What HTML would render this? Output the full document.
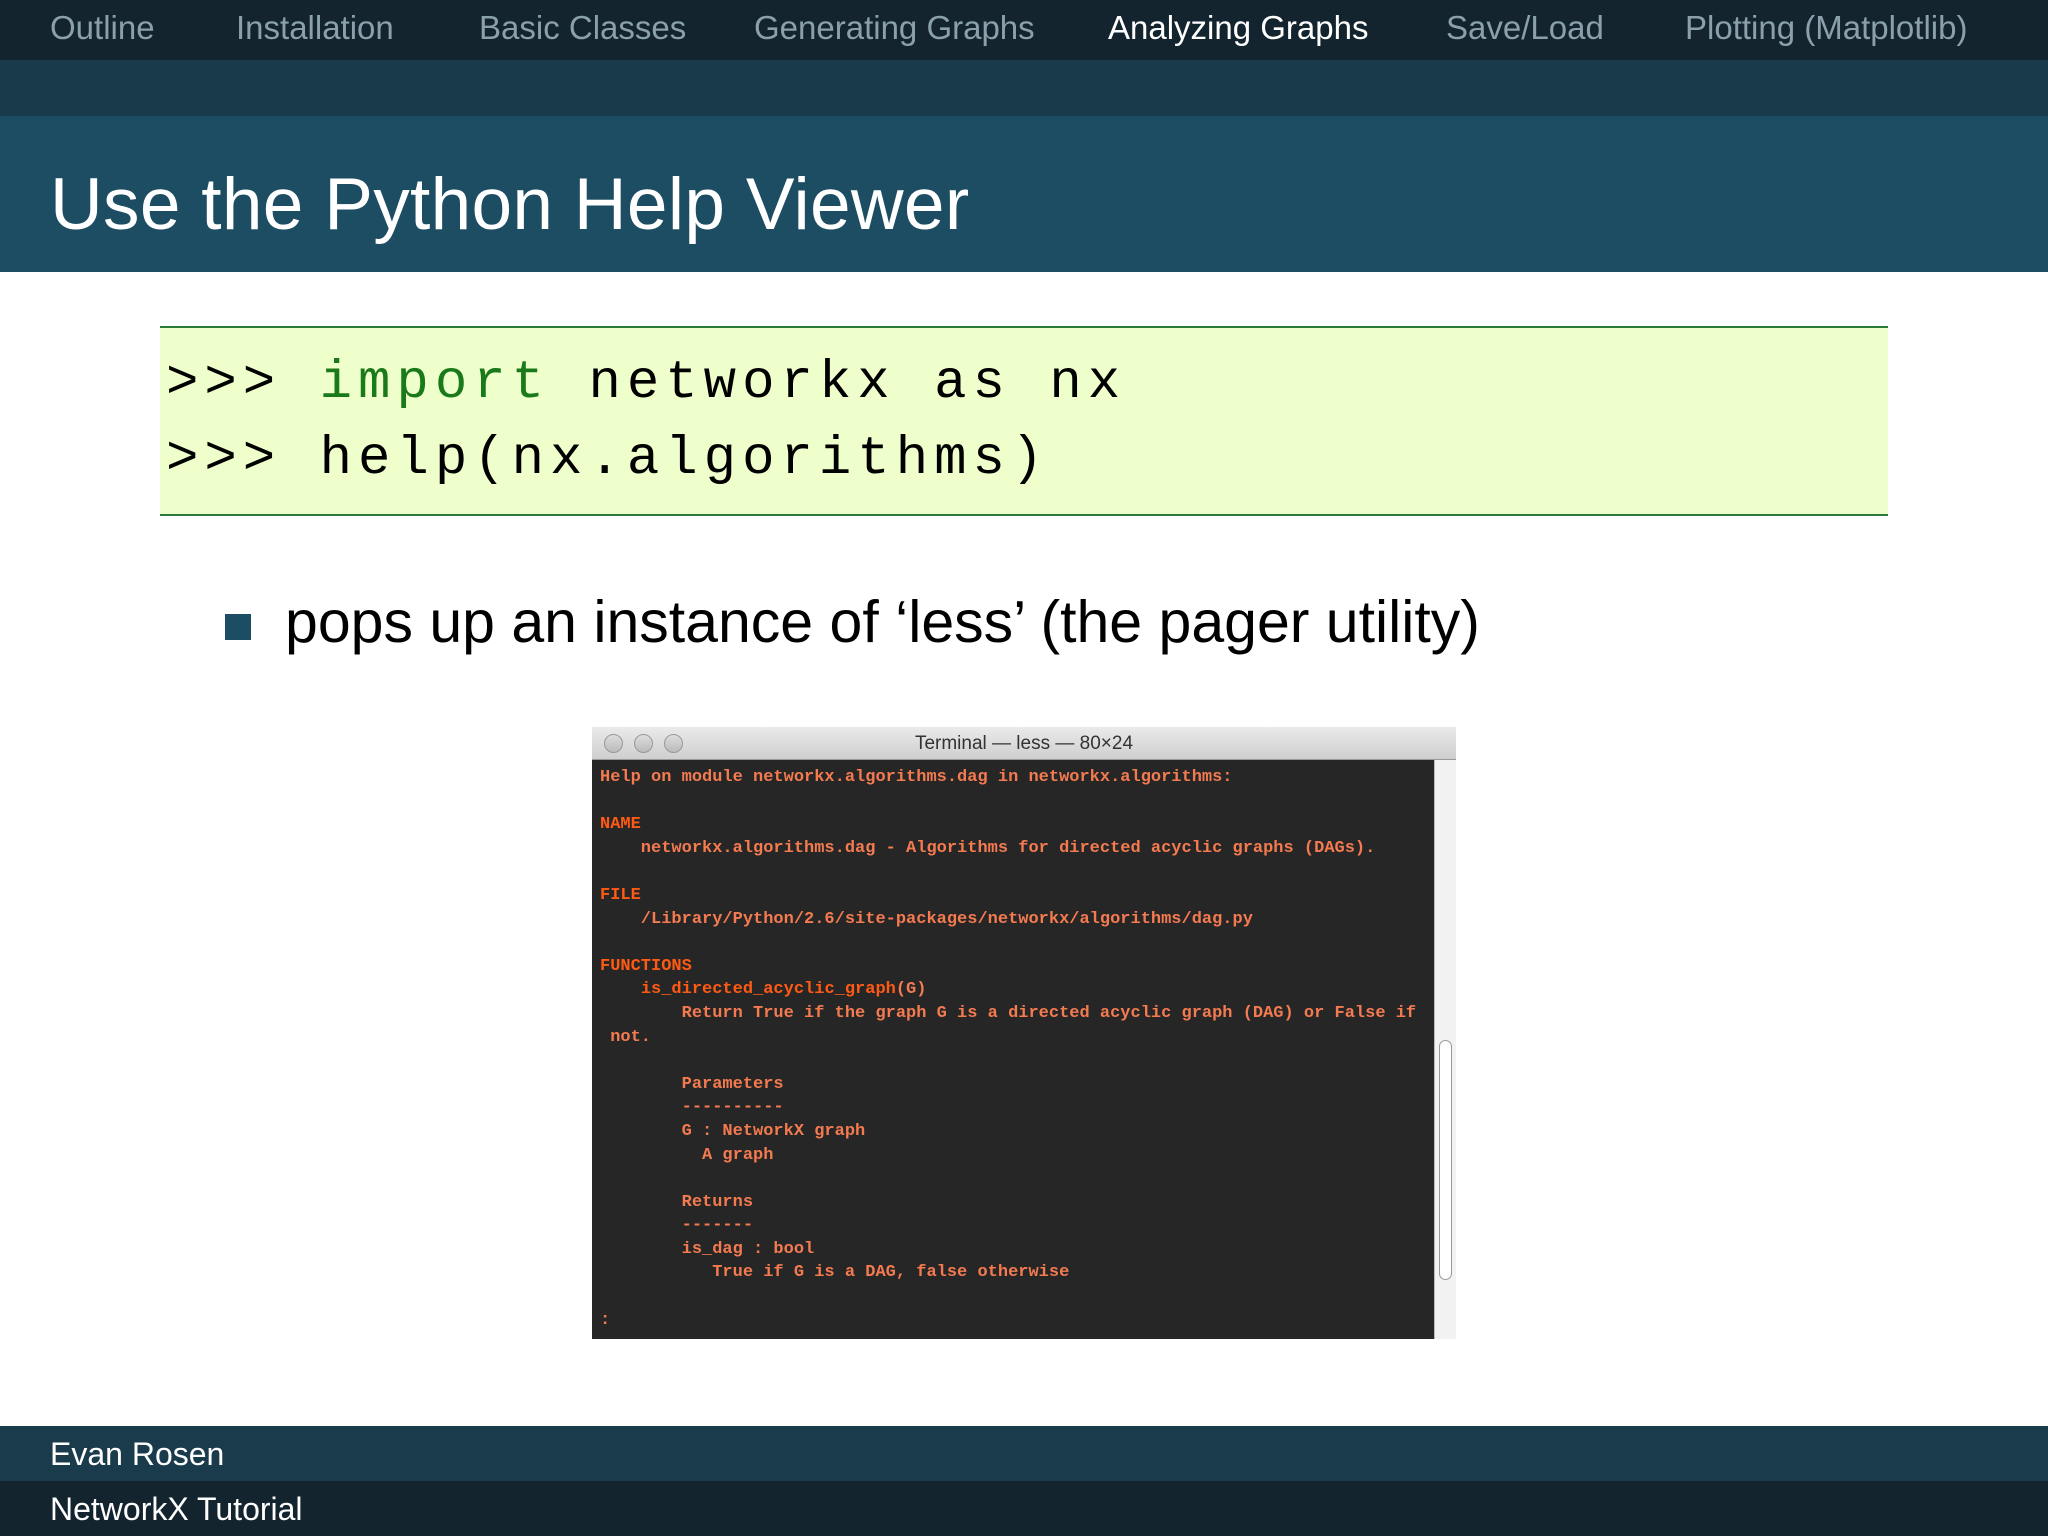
<!DOCTYPE html>
<html><head><meta charset="utf-8"><style>
*{margin:0;padding:0;box-sizing:border-box}
body{width:2048px;height:1536px;background:#fff;position:relative;overflow:hidden;font-family:"Liberation Sans",sans-serif}
.nav{position:absolute;left:0;top:0;width:2048px;height:60px;background:#13242e}
.nav span{position:absolute;top:9px;font-size:33px;color:#8aa0aa;white-space:nowrap}
.band{position:absolute;left:0;top:60px;width:2048px;height:56px;background:#183a4b}
.title{position:absolute;left:0;top:116px;width:2048px;height:156px;background:#1d4d63}
.title h1{position:absolute;left:50px;top:47px;font-weight:normal;color:#fff;font-size:73px;white-space:nowrap;letter-spacing:0.3px}
.code{position:absolute;left:160px;top:326px;width:1728px;height:190px;background:#eeffcc;border-top:2px solid #2a7a3a;border-bottom:2px solid #2a7a3a}
.code div{position:absolute;left:6px;font-family:"Liberation Mono",monospace;font-size:54px;letter-spacing:6px;color:#000;white-space:pre}
.kw{color:#1a7a1a}
.bullet{position:absolute;left:225px;top:614px;width:26px;height:26px;background:#1d4d63}
.btext{position:absolute;left:285px;top:588px;font-size:59px;color:#000;white-space:nowrap}
.term{position:absolute;left:592px;top:727px;width:864px;height:612px;background:#262626}
.tbar{position:absolute;left:0;top:0;width:864px;height:33px;background:linear-gradient(#eaeaea,#cfcfcf);border-bottom:1px solid #999}
.tbar .t{position:absolute;left:0;width:864px;text-align:center;top:6px;font-size:19px;color:#333}
.dot{position:absolute;top:7px;width:19px;height:19px;border-radius:50%;background:linear-gradient(#ddd,#bbb);border:1px solid #999}
.sb{position:absolute;right:0;top:33px;width:22px;height:579px;background:#f2f2f2;border-left:1px solid #bbb}
.sb .th{position:absolute;left:4px;top:280px;width:13px;height:240px;border:1px solid #999;border-radius:7px;background:#fff}
.tx{position:absolute;left:8px;top:39px;font-family:"Liberation Mono",monospace;font-size:17px;line-height:23.6px;color:#f47a50;white-space:pre;font-weight:bold}
.h{color:#ff5a14}
.foot1{position:absolute;left:0;top:1426px;width:2048px;height:55px;background:#1a3b4c}
.foot2{position:absolute;left:0;top:1481px;width:2048px;height:55px;background:#13242e}
.foot1 span,.foot2 span{position:absolute;left:50px;top:10px;font-size:32px;color:#fff}
</style></head><body>
<div class="nav">
<span style="left:50px">Outline</span>
<span style="left:236px">Installation</span>
<span style="left:479px">Basic Classes</span>
<span style="left:754px">Generating Graphs</span>
<span style="left:1108px;color:#fff">Analyzing Graphs</span>
<span style="left:1446px">Save/Load</span>
<span style="left:1685px">Plotting (Matplotlib)</span>
</div>
<div class="band"></div>
<div class="title"><h1>Use the Python Help Viewer</h1></div>
<div class="code">
<div style="top:25px">&gt;&gt;&gt; <span class="kw">import</span> networkx as nx</div>
<div style="top:101px">&gt;&gt;&gt; help(nx.algorithms)</div>
</div>
<div class="bullet"></div>
<div class="btext">pops up an instance of ‘less’ (the pager utility)</div>
<div class="term">
<div class="tbar"><div class="dot" style="left:12px"></div><div class="dot" style="left:42px"></div><div class="dot" style="left:72px"></div><div class="t">Terminal — less — 80×24</div></div>
<div class="sb"><div class="th"></div></div>
<div class="tx">Help on module networkx.algorithms.dag in networkx.algorithms:

<span class="h">NAME</span>
    networkx.algorithms.dag - Algorithms for directed acyclic graphs (DAGs).

<span class="h">FILE</span>
    /Library/Python/2.6/site-packages/networkx/algorithms/dag.py

<span class="h">FUNCTIONS</span>
    <span class="h">is_directed_acyclic_graph</span>(G)
        Return True if the graph G is a directed acyclic graph (DAG) or False if
 not.

        Parameters
        ----------
        G : NetworkX graph
          A graph

        Returns
        -------
        is_dag : bool
           True if G is a DAG, false otherwise

:</div>
</div>
<div class="foot1"><span>Evan Rosen</span></div>
<div class="foot2"><span>NetworkX Tutorial</span></div>
</body></html>
